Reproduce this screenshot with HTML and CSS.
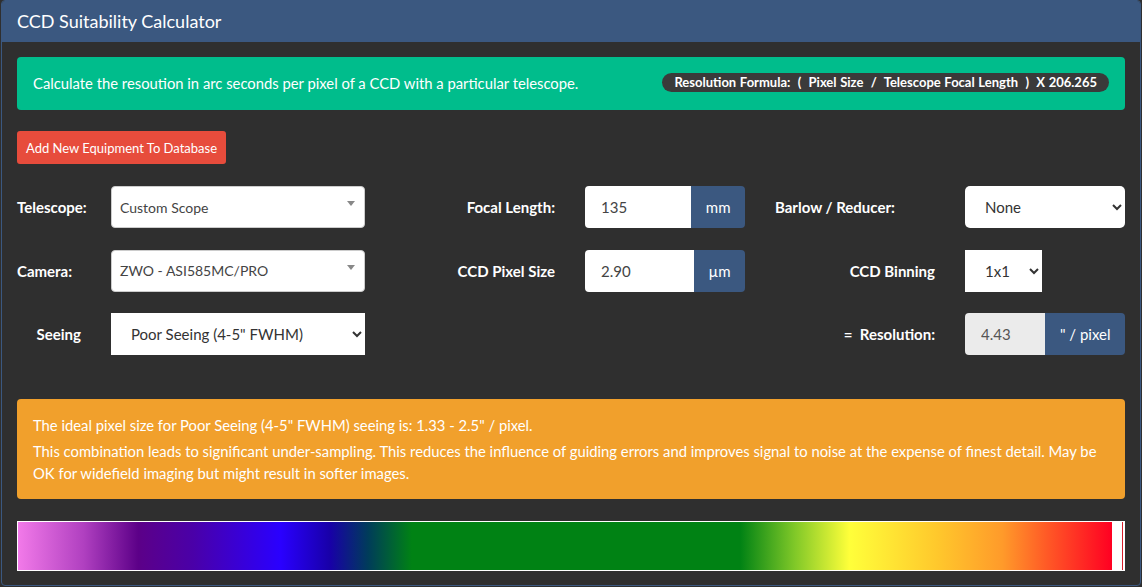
FILE: index.html
```html
<!DOCTYPE html>
<html lang="en">
  <head>
    <meta charset="UTF-8" />
    <meta name="viewport" content="width=device-width, initial-scale=1.0" />
    <title>CCD Suitability Calculator</title>
    <link rel="stylesheet" href="styles.css">
  </head>
  <body>
    <div class="panel">
      <div class="panel-heading">CCD Suitability Calculator</div>
      <div class="panel-body">
        <div class="alert alert-success">
          <span class="badge">Resolution Formula:&nbsp; (&nbsp; Pixel Size&nbsp; /&nbsp; Telescope Focal Length&nbsp; )&nbsp; X 206.265</span>
          Calculate the resoution in arc seconds per pixel of a CCD with a particular telescope.
        </div>

        <button type="button" class="btn-danger">Add New Equipment To Database</button>

        <div class="calc-grid">
          <label class="lbl">Telescope:</label>
          <div class="fake-select">
            <span>Custom Scope</span>
            <b class="caret"></b>
          </div>
          <label class="lbl right">Focal Length:</label>
          <div class="input-group">
            <input type="text" class="form-input" value="135" />
            <span class="addon">mm</span>
          </div>
          <label class="lbl">Barlow / Reducer:</label>
          <select class="native rounded">
            <option>None</option>
          </select>

          <label class="lbl">Camera:</label>
          <div class="fake-select">
            <span>ZWO - ASI585MC/PRO</span>
            <b class="caret"></b>
          </div>
          <label class="lbl right">CCD Pixel Size</label>
          <div class="input-group">
            <input type="text" class="form-input" value="2.90" />
            <span class="addon">µm</span>
          </div>
          <label class="lbl right">CCD Binning</label>
          <div>
            <select class="native binning">
              <option>1x1</option>
            </select>
          </div>

          <label class="lbl right">Seeing</label>
          <select class="native">
            <option>Poor Seeing (4-5" FWHM)</option>
          </select>
          <div></div>
          <div></div>
          <label class="lbl right">=&nbsp; Resolution:</label>
          <div class="input-group">
            <input type="text" class="form-input readonly" value="4.43" readonly />
            <span class="addon">" / pixel</span>
          </div>
        </div>

        <div class="alert alert-warning">
          <p>The ideal pixel size for Poor Seeing (4-5" FWHM) seeing is: 1.33 - 2.5" / pixel.</p>
          <p>This combination leads to significant under-sampling. This reduces the influence of guiding errors and improves signal to noise at the expense of finest detail. May be OK for widefield imaging but might result in softer images.</p>
        </div>

        <div class="scale">
          <div class="scale-fill"></div>
          <div class="marker"></div>
        </div>
      </div>
    </div>
  </body>
</html>
```

FILE: styles.css
```css
body {
  font-family: Lato, "Open Sans", sans-serif;
  font-size: 15px;
  background-color: #2f2f2f;
  color: #fff;
  margin: 0;
}

.panel {
  margin: 0 1px;
  border: 1px solid #3b5880;
  border-radius: 4px;
  background-color: #2f2f2f;
  height: 586px;
  box-sizing: border-box;
  overflow: hidden;
}

.panel-heading {
  background-color: #3b5880;
  height: 41px;
  line-height: 40px;
  padding: 0 15px;
  font-size: 18px;
}

.panel-body {
  padding: 15px;
}

.alert {
  border-radius: 4px;
  padding: 15px 16px;
  line-height: 22px;
  font-size: 14.8px;
}

.alert p {
  margin: 0 0 4px;
}

.alert p:last-child {
  margin-bottom: 0;
}

.alert-success {
  background-color: #00bd8c;
  height: 53px;
  box-sizing: border-box;
}

.alert-warning {
  background-color: #f1a02c;
  margin-top: 44px;
}

.badge {
  float: right;
  background-color: #3a3a3a;
  border-radius: 10px;
  font-size: 13px;
  font-weight: bold;
  line-height: 19px;
  padding: 0 12px;
  margin-top: 1px;
  word-spacing: 0.5px;
}

.btn-danger {
  margin-top: 21px;
  background-color: #e74c3c;
  color: #fff;
  border: none;
  border-radius: 3px;
  font-family: inherit;
  font-size: 13px;
  height: 33px;
  padding: 0 9px;
}

.calc-grid {
  display: grid;
  grid-template-columns: 64px 254px 160px 160px 160px 160px;
  column-gap: 30px;
  row-gap: 21.5px;
  grid-auto-rows: 42px;
  align-items: center;
  margin-top: 22px;
}

.lbl {
  font-weight: bold;
  white-space: nowrap;
}

.lbl.right {
  text-align: right;
}

.fake-select {
  background-color: #fff;
  border: 1px solid #ccc;
  border-radius: 4px;
  height: 42px;
  box-sizing: border-box;
  padding: 0 8px;
  display: flex;
  align-items: center;
  position: relative;
  color: #444;
  font-size: 14px;
}

.caret {
  position: absolute;
  right: 9px;
  top: 14px;
  border-left: 4px solid transparent;
  border-right: 4px solid transparent;
  border-top: 5px solid #888;
}

.native {
  height: 42px;
  width: 100%;
  border: none;
  border-radius: 0;
  background-color: #fff;
  color: #333;
  font-family: inherit;
  font-size: 15px;
  padding: 0 10px 0 16px;
}

.native.rounded {
  border-radius: 5px;
}

.native.binning {
  width: 77px;
}

.input-group {
  display: flex;
  height: 42px;
}

.form-input {
  flex: 1;
  min-width: 0;
  border: none;
  border-radius: 4px 0 0 4px;
  padding: 0 16px;
  font-family: inherit;
  font-size: 15px;
  color: #444;
  background-color: #fff;
}

.form-input.readonly {
  background-color: #ebebeb;
  color: #555;
}

.addon {
  background-color: #3b5880;
  color: #fff;
  border-radius: 0 4px 4px 0;
  padding: 0 14.5px;
  display: flex;
  align-items: center;
}

.scale {
  margin-top: 22px;
  border: 1px solid #fff;
  background-color: #fff;
  height: 48px;
  position: relative;
}

.scale-fill {
  height: 100%;
  width: 1094px;
  background: linear-gradient(to right,
    #f27ae9 0%,
    #b040c0 6%,
    #5c0088 11%,
    #4a00a8 16%,
    #2a00ff 24%,
    #1800a8 28.5%,
    #003c5a 32%,
    #008214 36%,
    #008214 66%,
    #80c828 71%,
    #ffff3a 76%,
    #ffc82c 84%,
    #ff9a2a 90%,
    #ff5a26 94%,
    #ff0022 100%);
}

.marker {
  position: absolute;
  top: 0;
  bottom: 0;
  right: 1px;
  width: 1px;
  background-color: #d81e2a;
}
```
